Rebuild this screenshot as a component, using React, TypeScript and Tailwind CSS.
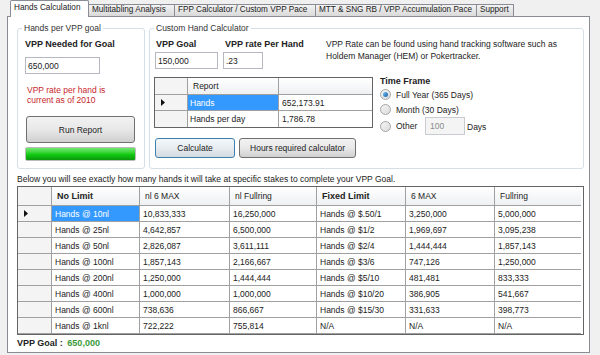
import React from "react";

const tabs = [
  { label: "Multitabling Analysis", w: "w-[86px]" },
  { label: "FPP Calculator / Custom VPP Pace", w: "w-[141px]" },
  { label: "MTT & SNG RB / VPP Accumulation Pace", w: "w-[161px]" },
  { label: "Support", w: "w-[37px]" },
];

const rows = [
  ["Hands @ 10nl", "10,833,333", "16,250,000", "Hands @ $.50/1", "3,250,000", "5,000,000"],
  ["Hands @ 25nl", "4,642,857", "6,500,000", "Hands @ $1/2", "1,969,697", "3,095,238"],
  ["Hands @ 50nl", "2,826,087", "3,611,111", "Hands @ $2/4", "1,444,444", "1,857,143"],
  ["Hands @ 100nl", "1,857,143", "2,166,667", "Hands @ $3/6", "747,126", "1,250,000"],
  ["Hands @ 200nl", "1,250,000", "1,444,444", "Hands @ $5/10", "481,481", "833,333"],
  ["Hands @ 400nl", "1,000,000", "1,000,000", "Hands @ $10/20", "386,905", "541,667"],
  ["Hands @ 600nl", "738,636", "866,667", "Hands @ $15/30", "331,633", "398,773"],
  ["Hands @ 1knl", "722,222", "755,814", "N/A", "N/A", "N/A"],
];

const headers = [
  { text: "No Limit", bold: true },
  { text: "nl 6 MAX", bold: false },
  { text: "nl Fullring", bold: false },
  { text: "Fixed Limit", bold: true },
  { text: "6 MAX", bold: false },
  { text: "Fullring", bold: false },
];

function Arrow() {
  return (
    <svg width="4" height="7" viewBox="0 0 4 7">
      <polygon points="0,0 4,3.5 0,7" fill="#111" />
    </svg>
  );
}

function Radio({ checked }: { checked?: boolean }) {
  return (
    <span className="w-[11px] h-[11px] rounded-full border border-[#a3a5a8] bg-linear-to-br from-[#f4f4f4] to-[#dcdcdc] flex items-center justify-center shrink-0">
      {checked && (
        <span className="w-[5px] h-[5px] rounded-full bg-linear-to-br from-[#6fc3f5] to-[#1a5fa8]" />
      )}
    </span>
  );
}

export default function App() {
  return (
    <div className="w-[600px] h-[355px] bg-[#f0f0f0] overflow-hidden font-['Liberation_Sans',Arial,sans-serif] text-[8.5px] leading-[10px] text-[#222]">
      {/* tab strip */}
      <div className="flex items-end h-[16px] pl-[10px] text-[8.2px]">
        <div className="relative z-10 -mb-px h-[17px] w-[79px] bg-white border-t border-l border-r border-[#898c95] rounded-t-[2px] pl-[3px] pt-[2px] whitespace-nowrap">
          Hands Calculation
        </div>
        {tabs.map((t) => (
          <div
            key={t.label}
            className={`${t.w} h-[12px] border-t border-r border-[#898c95] bg-linear-to-b from-[#f3f3f3] to-[#d9d9d9] pl-[3px] whitespace-nowrap overflow-hidden`}
          >
            {t.label}
          </div>
        ))}
      </div>

      {/* tab page */}
      <div className="ml-[7px] w-[583px] h-[337px] border border-[#898c95] bg-white pl-[9px] pt-[6px]">
        <div className="flex gap-[4px]">
          {/* Hands per VPP goal */}
          <fieldset className="w-[128px] h-[146px] border border-[#d5dfe5] rounded-[3px]">
            <legend className="ml-[4px] px-[2px] text-[#333]">Hands per VPP goal</legend>
            <div className="pl-[7px]">
              <div className="mt-[5px] font-bold text-[9px] leading-[12px]">VPP Needed for Goal</div>
              <div className="mt-[7px] w-[75px] h-[17px] border border-[#b5b8c0] pl-[2px] flex items-center">650,000</div>
              <div className="mt-[11px] ml-[2px] text-[#c8262b]">
                VPP rate per hand is
                <br />
                current as of 2010
              </div>
              <button className="mt-[11px] ml-px w-[109px] h-[27px] border border-[#707070] rounded-[3px] bg-linear-to-b from-[#f2f2f2] via-[#e8e8e8] to-[#d0d0d0]">
                Run Report
              </button>
              <div className="mt-[4px] w-[111px] h-[14px] border border-[#bcbcbc] rounded-[2px] bg-linear-to-b from-[#6ee86e] via-[#14cf14] to-[#0a980a]" />
            </div>
          </fieldset>

          {/* Custom Hand Calculator */}
          <fieldset className="w-[435px] h-[146px] border border-[#d5dfe5] rounded-[3px]">
            <legend className="ml-[4px] px-[2px] text-[#333]">Custom Hand Calculator</legend>
            <div className="flex pl-[5px]">
              <div className="w-[68px]">
                <div className="mt-[5px] ml-px font-bold text-[9px] leading-[12px]">VPP Goal</div>
                <div className="mt-[2px] w-[63px] h-[17px] border border-[#b5b8c0] pl-[2px] flex items-center">150,000</div>
              </div>
              <div className="w-[103px]">
                <div className="mt-[5px] ml-[2px] font-bold text-[9px] leading-[12px] whitespace-nowrap">VPP rate Per Hand</div>
                <div className="mt-[2px] w-[40px] h-[17px] border border-[#b5b8c0] pl-[2px] flex items-center">.23</div>
              </div>
              <div className="mt-[5px] leading-[12px]">
                VPP Rate can be found using hand tracking software such as
                <br />
                Holdem Manager (HEM) or Pokertracker.
              </div>
            </div>

            <div className="flex pl-[4px] mt-[8px]">
              <div className="w-[219px]">
                <div className="border border-[#646464] bg-white grid grid-cols-[33px_91px_93px]">
                  <div className="h-[17px] border-b border-r border-[#a0a0a0] bg-[#f4f4f4]" />
                  <div className="h-[17px] border-b border-r border-[#a0a0a0] bg-linear-to-b from-white to-[#eef0f2] pl-[5px] flex items-center">Report</div>
                  <div className="h-[17px] border-b border-[#a0a0a0] bg-linear-to-b from-white to-[#eef0f2]" />
                  <div className="h-[16px] border-b border-r border-[#a0a0a0] bg-[#f4f4f4] pl-[6px] flex items-center">
                    <Arrow />
                  </div>
                  <div className="h-[16px] border-b border-r border-[#a0a0a0] bg-[#3399ff] text-white pl-[2px] flex items-center">Hands</div>
                  <div className="h-[16px] border-b border-[#a0a0a0] pl-[3px] flex items-center">652,173.91</div>
                  <div className="h-[16px] border-r border-[#a0a0a0] bg-[#f4f4f4]" />
                  <div className="h-[16px] border-r border-[#a0a0a0] pl-[2px] flex items-center">Hands per day</div>
                  <div className="h-[16px] pl-[3px] flex items-center">1,786.78</div>
                </div>
                <div className="flex gap-[4px] mt-[10px] ml-px">
                  <button className="w-[80px] h-[20px] border border-[#3c7fb1] rounded-[3px] bg-linear-to-b from-[#f4f8fb] via-[#e6ecf0] to-[#d3dbe1]">
                    Calculate
                  </button>
                  <button className="w-[117px] h-[20px] border border-[#707070] rounded-[3px] bg-linear-to-b from-[#f2f2f2] via-[#e8e8e8] to-[#d0d0d0]">
                    Hours required calculator
                  </button>
                </div>
              </div>

              <div className="ml-[7px] -mt-[2px]">
                <div className="font-bold text-[9px] leading-[12px]">Time Frame</div>
                <div className="h-[15px] flex items-center">
                  <Radio checked />
                  <span className="ml-[5px]">Full Year (365 Days)</span>
                </div>
                <div className="h-[15px] flex items-center">
                  <Radio />
                  <span className="ml-[5px]">Month (30 Days)</span>
                </div>
                <div className="h-[18px] flex items-center">
                  <Radio />
                  <span className="ml-[5px] w-[29px]">Other</span>
                  <div className="w-[40px] h-[18px] border border-[#c9cbd0] bg-[#f4f4f4] text-[#8a8a8a] pl-[4px] flex items-center">100</div>
                  <span className="ml-[2px] mt-[2px]">Days</span>
                </div>
              </div>
            </div>
          </fieldset>
        </div>

        <div className="mt-[5px]">
          Below you will see exactly how many hands it will take at specific stakes to complete your VPP Goal.
        </div>

        {/* main grid */}
        <div className="mt-[2px] w-[567px] border border-[#646464] bg-white grid grid-cols-[34px_88px_90px_87px_89px_89px_86px]">
          <div className="h-[19px] border-b border-r border-[#a0a0a0] bg-[#f4f4f4]" />
          {headers.map((h, i) => (
            <div
              key={h.text}
              className={`h-[19px] border-b ${i < 5 ? "border-r" : ""} border-[#a0a0a0] bg-linear-to-b from-white to-[#eef0f2] pl-[5px] flex items-center ${h.bold ? "font-bold text-[9px]" : ""}`}
            >
              {h.text}
            </div>
          ))}
          {rows.map((r, ri) => (
            <React.Fragment key={r[0]}>
              <div className="h-[16px] border-b border-r border-[#a0a0a0] bg-[#f4f4f4] pl-[6px] flex items-center">
                {ri === 0 && <Arrow />}
              </div>
              {r.map((c, ci) => (
                <div
                  key={ci}
                  className={`h-[16px] border-b ${ci < 5 ? "border-r" : ""} border-[#a0a0a0] pl-[3px] flex items-center whitespace-nowrap ${
                    ri === 0 && ci === 0 ? "bg-[#3399ff] text-white" : ""
                  }`}
                >
                  {c}
                </div>
              ))}
            </React.Fragment>
          ))}
        </div>

        <div className="mt-[3px] font-bold text-[9px] leading-[10px]">
          VPP Goal : <span className="ml-[2px] text-[#3a9a3a]">650,000</span>
        </div>
      </div>
    </div>
  );
}
